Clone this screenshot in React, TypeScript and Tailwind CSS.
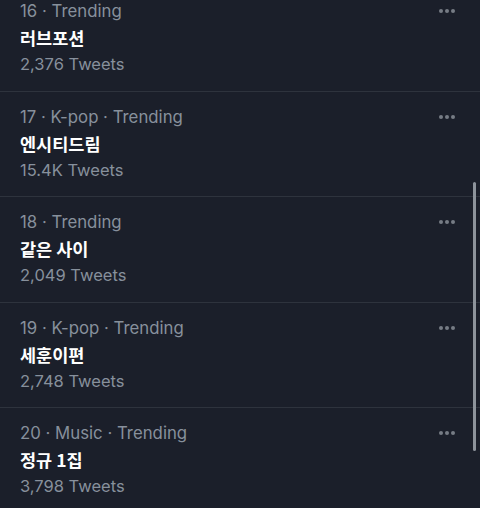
const TRENDS = [
  { rank: 16, category: null, title: '러브포션', tweets: '2,376' },
  { rank: 17, category: 'K-pop', title: '엔시티드림', tweets: '15.4K' },
  { rank: 18, category: null, title: '같은 사이', tweets: '2,049' },
  { rank: 19, category: 'K-pop', title: '세훈이편', tweets: '2,748' },
  { rank: 20, category: 'Music', title: '정규 1집', tweets: '3,798' },
]

function MoreIcon() {
  return (
    <svg className="w-[18px] h-[6px]" viewBox="0 0 18 6" fill="#767c85">
      <circle cx="3" cy="3" r="2" />
      <circle cx="9" cy="3" r="2" />
      <circle cx="15" cy="3" r="2" />
    </svg>
  )
}

export default function App() {
  return (
    <div
      className="relative w-[480px] h-[508px] overflow-hidden bg-[#1b1f2a]"
      style={{ fontFamily: 'Inter, "Noto Sans CJK KR", sans-serif' }}
    >
      <div className="-mt-[14px]">
        {TRENDS.map(t => (
          <div key={t.rank} className="border-b border-[#2e333d] pl-5 pr-6 pt-[14px] pb-[14.5px] flex justify-between">
            <div>
              <p className="text-[16.8px] leading-[22px] text-[#87909c]">
                {t.rank} · {t.category ? `${t.category} · ` : ''}Trending
              </p>
              <p className="text-[17.5px] leading-[31px] font-bold text-white" style={{ fontFamily: '"Noto Sans CJK KR", Inter, sans-serif' }}>
                {t.title}
              </p>
              <p className="text-[16.5px] leading-[23px] text-[#87909c]">{t.tweets} Tweets</p>
            </div>
            <div className="pt-[8px]">
              <MoreIcon />
            </div>
          </div>
        ))}
      </div>
      {/* scroll indicator */}
      <div className="absolute left-[473px] top-[182px] w-[3px] h-[269px] rounded-full bg-[#8d939b]" />
    </div>
  )
}
